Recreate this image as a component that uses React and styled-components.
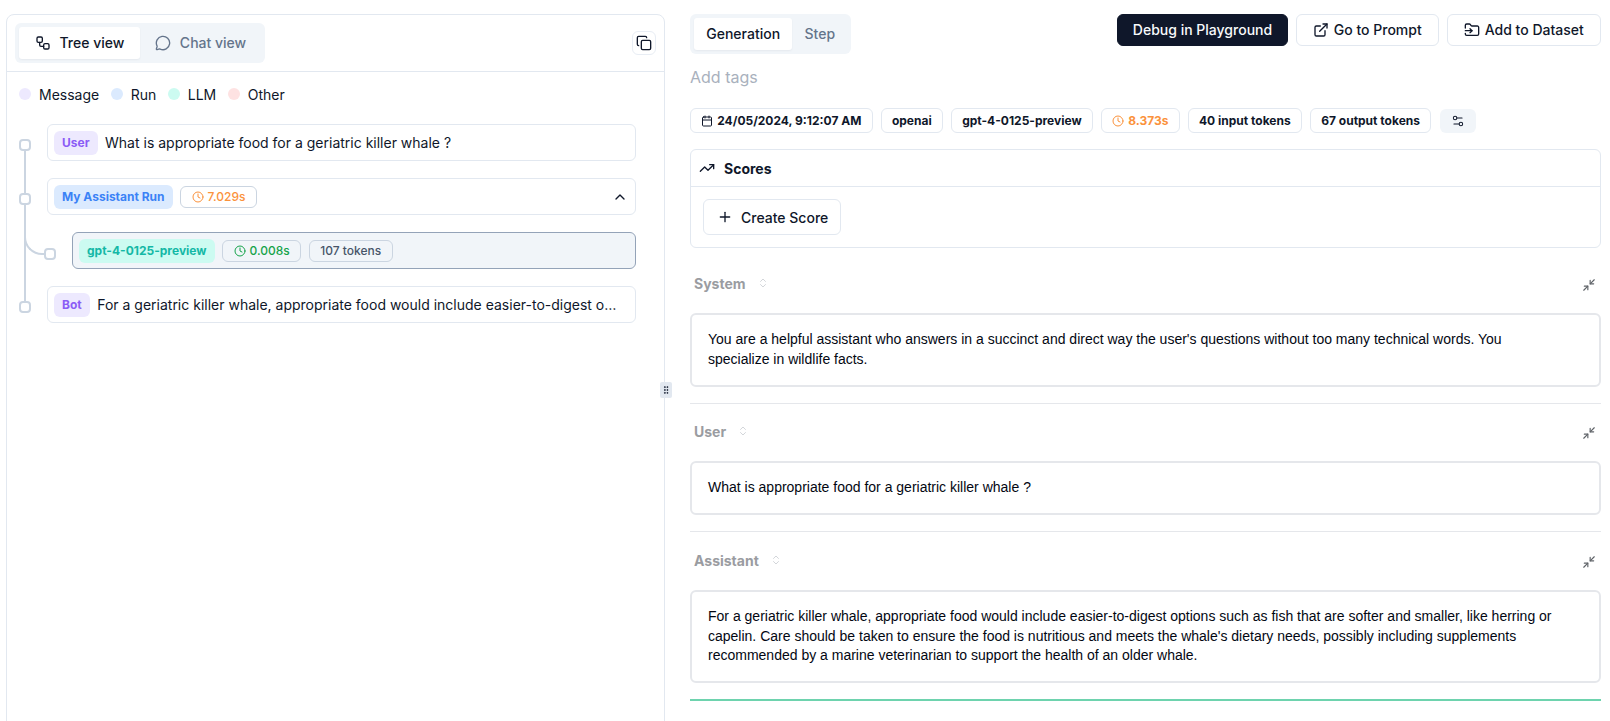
import React from "react";
import styled, { createGlobalStyle } from "styled-components";
import {
  Workflow,
  MessageCircle,
  Copy,
  Calendar,
  Clock,
  ExternalLink,
  FolderInput,
  TrendingUp,
  Plus,
  ChevronsUpDown,
  Minimize2,
  ChevronUp,
  Settings2,
  GripVertical,
} from "lucide-react";

const GlobalStyle = createGlobalStyle`
  html, body {
    margin: 0;
    height: 100%;
    background: #fff;
    overflow: hidden;
  }
  * { box-sizing: border-box; }
  body {
    font-family: Inter, "Liberation Sans", sans-serif;
    color: #0f172a;
  }
`;

const Page = styled.div`
  display: flex;
  height: 721px;
  padding: 14px 9px 0 6px;
  overflow: hidden;
`;

const LeftPanel = styled.section`
  position: relative;
  width: 659px;
  height: 740px;
  flex: none;
  border: 1px solid #e2e8f0;
  border-radius: 8px;
`;

const LeftHeader = styled.div`
  display: flex;
  align-items: center;
  justify-content: space-between;
  height: 57px;
  padding: 0 8px;
  border-bottom: 1px solid #e2e8f0;
`;

const Tabs = styled.div`
  display: inline-flex;
  align-items: center;
  height: 40px;
  padding: 4px;
  border-radius: 6px;
  background: #f1f5f9;
`;

const Tab = styled.div`
  display: flex;
  align-items: center;
  gap: ${(p) => p.$gap || 0}px;
  height: 32px;
  padding: 0 ${(p) => p.$pad || 12.25}px 1px;
  border-radius: 3px;
  font-size: 14px;
  font-weight: 500;
  background: ${(p) => (p.$active ? "#fff" : "transparent")};
  color: ${(p) => (p.$active ? "#0f172a" : "#64748b")};
  box-shadow: ${(p) => (p.$active ? "0 1px 2px rgba(15,23,42,.05)" : "none")};
`;

const CopyButton = styled.div`
  display: flex;
  align-items: center;
  justify-content: center;
  width: 24px;
  height: 24px;
  border: 1px solid #e8edf4;
  border-radius: 6px;
`;

const Legend = styled.div`
  display: flex;
  align-items: center;
  gap: 11.5px;
  height: 20px;
  margin: 12px 0 0 12px;
  font-size: 14px;
  color: #0f172a;
`;

const LegendItem = styled.div`
  display: flex;
  align-items: center;
  gap: 8px;
`;

const Dot = styled.span`
  width: 12px;
  height: 12px;
  border-radius: 50%;
  background: ${(p) => p.$color};
`;

const Tree = styled.div`
  display: flex;
  flex-direction: column;
  gap: 17px;
  margin-top: 20px;
  padding-right: 28px;
`;

const TreeRow = styled.div`
  position: relative;
  display: flex;
  padding-left: ${(p) => (p.$nested ? 65 : 40)}px;
`;

const Node = styled.span`
  position: absolute;
  z-index: 1;
  left: ${(p) => (p.$nested ? 37 : 12)}px;
  top: ${(p) => (p.$nested ? 16 : 15)}px;
  width: 12px;
  height: 12px;
  border: 2px solid #cbd5e1;
  border-radius: 4px;
  background: #fff;
`;

// vertical rail between the nodes
const Rail = styled.span`
  position: absolute;
  left: 17px;
  top: 24px;
  width: 2px;
  height: ${(p) => p.$height}px;
  background: #cbd5e1;
`;

// curve from the rail into a nested node
const Elbow = styled.span`
  position: absolute;
  left: 17px;
  top: -12px;
  width: 21px;
  height: 35px;
  border-left: 2px solid #cbd5e1;
  border-bottom: 2px solid #cbd5e1;
  border-bottom-left-radius: 18px;
`;

const Card = styled.div`
  display: flex;
  align-items: center;
  gap: 7.5px;
  flex: 1;
  min-width: 0;
  height: 37px;
  padding: 0 ${(p) => p.$endPad || 7}px 0 6px;
  border: 1px solid ${(p) => (p.$selected ? "#94a3b8" : "#e2e8f0")};
  border-radius: 6px;
  background: ${(p) => (p.$selected ? "#f1f5f9" : "#fff")};
  font-size: 14px;
  color: #0f172a;
`;

const RowText = styled.span`
  overflow: hidden;
  white-space: nowrap;
  text-overflow: ellipsis;
`;

const Tag = styled.span`
  display: inline-flex;
  align-items: center;
  height: 24px;
  padding: 0 8px;
  border-radius: 6px;
  font-size: 12px;
  font-weight: 650;
  white-space: nowrap;
  flex: none;
  background: ${(p) => p.$bg};
  color: ${(p) => p.$color};
`;

const Stat = styled.span`
  display: inline-flex;
  align-items: center;
  gap: 4px;
  height: 22px;
  padding: 0 10.5px;
  border: 1px solid #cbd5e1;
  border-radius: 6px;
  font-size: 12px;
  font-weight: 450;
  white-space: nowrap;
  color: ${(p) => p.$color || "#475569"};
`;

const Chevron = styled.span`
  display: flex;
  margin-left: auto;
`;

const Handle = styled.div`
  position: absolute;
  z-index: 2;
  right: -8px;
  top: 367px;
  display: flex;
  align-items: center;
  justify-content: center;
  width: 12px;
  height: 16px;
  border-radius: 2px;
  background: #e2e8f0;
`;

const RightPanel = styled.section`
  display: flex;
  flex-direction: column;
  width: 911px;
  margin-left: 25px;
  flex: none;
`;

const TopBar = styled.div`
  display: flex;
  justify-content: space-between;
  align-items: flex-start;
`;

const Actions = styled.div`
  display: flex;
  gap: 8px;
`;

const Button = styled.div`
  display: flex;
  align-items: center;
  justify-content: center;
  gap: 4.5px;
  width: ${(p) => p.$width}px;
  height: 32px;
  padding-bottom: 1px;
  border: 1px solid ${(p) => (p.$dark ? "#0f172a" : "#e2e8f0")};
  border-radius: 6px;
  font-size: 14px;
  font-weight: 500;
  background: ${(p) => (p.$dark ? "#0f172a" : "#fff")};
  color: ${(p) => (p.$dark ? "#f8fafc" : "#0f172a")};
`;

const AddTags = styled.div`
  height: 24px;
  margin-top: 11px;
  font-size: 16px;
  line-height: 24px;
  color: #a9b1bd;
`;

const Badges = styled.div`
  display: flex;
  align-items: center;
  gap: 8px;
  margin-top: 19px;
`;

const Badge = styled.span`
  display: inline-flex;
  align-items: center;
  gap: 4px;
  height: 25px;
  padding: 0 10.25px;
  border: 1px solid #e2e8f0;
  border-radius: 6px;
  font-size: 12px;
  font-weight: 700;
  white-space: nowrap;
  color: ${(p) => p.$color || "#0f172a"};
`;

const SettingsBadge = styled.span`
  display: flex;
  align-items: center;
  justify-content: center;
  width: 36px;
  height: 24px;
  margin-left: 1px;
  border-radius: 6px;
  background: #f1f5f9;
`;

const ScoresCard = styled.div`
  height: 99px;
  margin-top: 16px;
  border: 1px solid #e2e8f0;
  border-radius: 6px;
`;

const ScoresHeader = styled.div`
  display: flex;
  align-items: center;
  gap: 9px;
  height: 37px;
  padding-left: 8px;
  border-bottom: 1px solid #e2e8f0;
  font-size: 14px;
  font-weight: 650;
`;

const CreateScore = styled.div`
  display: flex;
  align-items: center;
  gap: 8px;
  width: 138px;
  height: 36px;
  margin: 12px 0 0 12px;
  padding-left: 13px;
  border: 1px solid #e2e8f0;
  border-radius: 6px;
  font-size: 14px;
  font-weight: 500;
`;

const Section = styled.div`
  padding-top: ${(p) => p.$top}px;
  padding-bottom: 16px;
  border-bottom: 1px solid ${(p) => p.$line || "#e5e7eb"};
  border-bottom-width: ${(p) => (p.$line ? 2 : 1)}px;
`;

const SectionHead = styled.div`
  display: flex;
  align-items: center;
  justify-content: space-between;
  height: 20px;
  padding: 0 5px 0 4px;
  margin-bottom: ${(p) => p.$gap}px;
`;

const SectionLabel = styled.div`
  display: flex;
  align-items: center;
  gap: 11px;
  font-size: 14px;
  font-weight: 700;
  color: #9a9ca1;
`;

const Collapse = styled.span`
  display: flex;
  margin-top: 4px;
  color: #5f6368;
`;

const MessageBox = styled.div`
  display: flex;
  align-items: center;
  height: ${(p) => p.$height}px;
  padding: 0 40px 0 16px;
  border: 2px solid #e5e7eb;
  border-radius: 6px;
  font-family: "Liberation Sans", Arial, sans-serif;
  font-size: 14px;
  line-height: 1.4;
  color: #030712;
`;

const sections = [
  {
    label: "System",
    top: 25,
    gap: 20,
    height: 74,
    text: "You are a helpful assistant who answers in a succinct and direct way the user's questions without too many technical words. You specialize in wildlife facts.",
  },
  {
    label: "User",
    top: 17,
    gap: 20,
    height: 54,
    text: "What is appropriate food for a geriatric killer whale ?",
  },
  {
    label: "Assistant",
    top: 18,
    gap: 20,
    height: 93,
    line: "#6ed3ae",
    text: "For a geriatric killer whale, appropriate food would include easier-to-digest options such as fish that are softer and smaller, like herring or capelin. Care should be taken to ensure the food is nutritious and meets the whale's dietary needs, possibly including supplements recommended by a marine veterinarian to support the health of an older whale.",
  },
];

export default function App() {
  return (
    <>
      <GlobalStyle />
      <Page>
        <LeftPanel>
          <LeftHeader>
            <Tabs>
              <Tab $active $gap={9} $pad={15.5}>
                <Workflow size={16} /> Tree view
              </Tab>
              <Tab $gap={9} $pad={15}>
                <MessageCircle size={16} /> Chat view
              </Tab>
            </Tabs>
            <CopyButton>
              <Copy size={16} color="#0f172a" />
            </CopyButton>
          </LeftHeader>
          <Legend>
            <LegendItem><Dot $color="#ede9fe" />Message</LegendItem>
            <LegendItem><Dot $color="#dbeafe" />Run</LegendItem>
            <LegendItem><Dot $color="#ccfbf1" />LLM</LegendItem>
            <LegendItem><Dot $color="#fee2e2" />Other</LegendItem>
          </Legend>
          <Tree>
            <TreeRow>
              <Rail $height={162} />
              <Node />
              <Card>
                <Tag $bg="#ede9fe" $color="#8b5cf6">User</Tag>
                <RowText>What is appropriate food for a geriatric killer whale ?</RowText>
              </Card>
            </TreeRow>
            <TreeRow>
              <Node />
              <Card>
                <Tag $bg="#dbeafe" $color="#3b82f6">My Assistant Run</Tag>
                <Stat $color="#fb923c">
                  <Clock size={12} /> 7.029s
                </Stat>
                <Chevron>
                  <ChevronUp size={16} color="#0f172a" />
                </Chevron>
              </Card>
            </TreeRow>
            <TreeRow $nested>
              <Elbow />
              <Node $nested />
              <Card $selected>
                <Tag $bg="#ccfbf1" $color="#14b8a6">gpt-4-0125-preview</Tag>
                <Stat $color="#16a34a">
                  <Clock size={12} /> 0.008s
                </Stat>
                <Stat>107 tokens</Stat>
              </Card>
            </TreeRow>
            <TreeRow>
              <Node />
              <Card $endPad={16}>
                <Tag $bg="#ede9fe" $color="#8b5cf6">Bot</Tag>
                <RowText>For a geriatric killer whale, appropriate food would include easier-to-digest options such as fish that are softer</RowText>
              </Card>
            </TreeRow>
          </Tree>
          <Handle>
            <GripVertical size={10} color="#0f172a" />
          </Handle>
        </LeftPanel>

        <RightPanel>
          <TopBar>
            <Tabs>
              <Tab $active>Generation</Tab>
              <Tab>Step</Tab>
            </Tabs>
            <Actions>
              <Button $dark $width={171}>Debug in Playground</Button>
              <Button $width={143}>
                <ExternalLink size={16} /> Go to Prompt
              </Button>
              <Button $width={154}>
                <FolderInput size={16} /> Add to Dataset
              </Button>
            </Actions>
          </TopBar>
          <AddTags>Add tags</AddTags>
          <Badges>
            <Badge>
              <Calendar size={12} /> 24/05/2024, 9:12:07 AM
            </Badge>
            <Badge>openai</Badge>
            <Badge>gpt-4-0125-preview</Badge>
            <Badge $color="#fb923c">
              <Clock size={12} /> 8.373s
            </Badge>
            <Badge>40 input tokens</Badge>
            <Badge>67 output tokens</Badge>
            <SettingsBadge>
              <Settings2 size={14} strokeWidth={1.75} />
            </SettingsBadge>
          </Badges>
          <ScoresCard>
            <ScoresHeader>
              <TrendingUp size={16} /> Scores
            </ScoresHeader>
            <CreateScore>
              <Plus size={16} /> Create Score
            </CreateScore>
          </ScoresCard>
          {sections.map((s) => (
            <Section key={s.label} $top={s.top} $line={s.line}>
              <SectionHead $gap={s.gap}>
                <SectionLabel>
                  {s.label}
                  <ChevronsUpDown size={12} strokeWidth={1.5} color="#c4c8ce" />
                </SectionLabel>
                <Collapse>
                  <Minimize2 size={14} />
                </Collapse>
              </SectionHead>
              <MessageBox $height={s.height}>{s.text}</MessageBox>
            </Section>
          ))}
        </RightPanel>
      </Page>
    </>
  );
}
